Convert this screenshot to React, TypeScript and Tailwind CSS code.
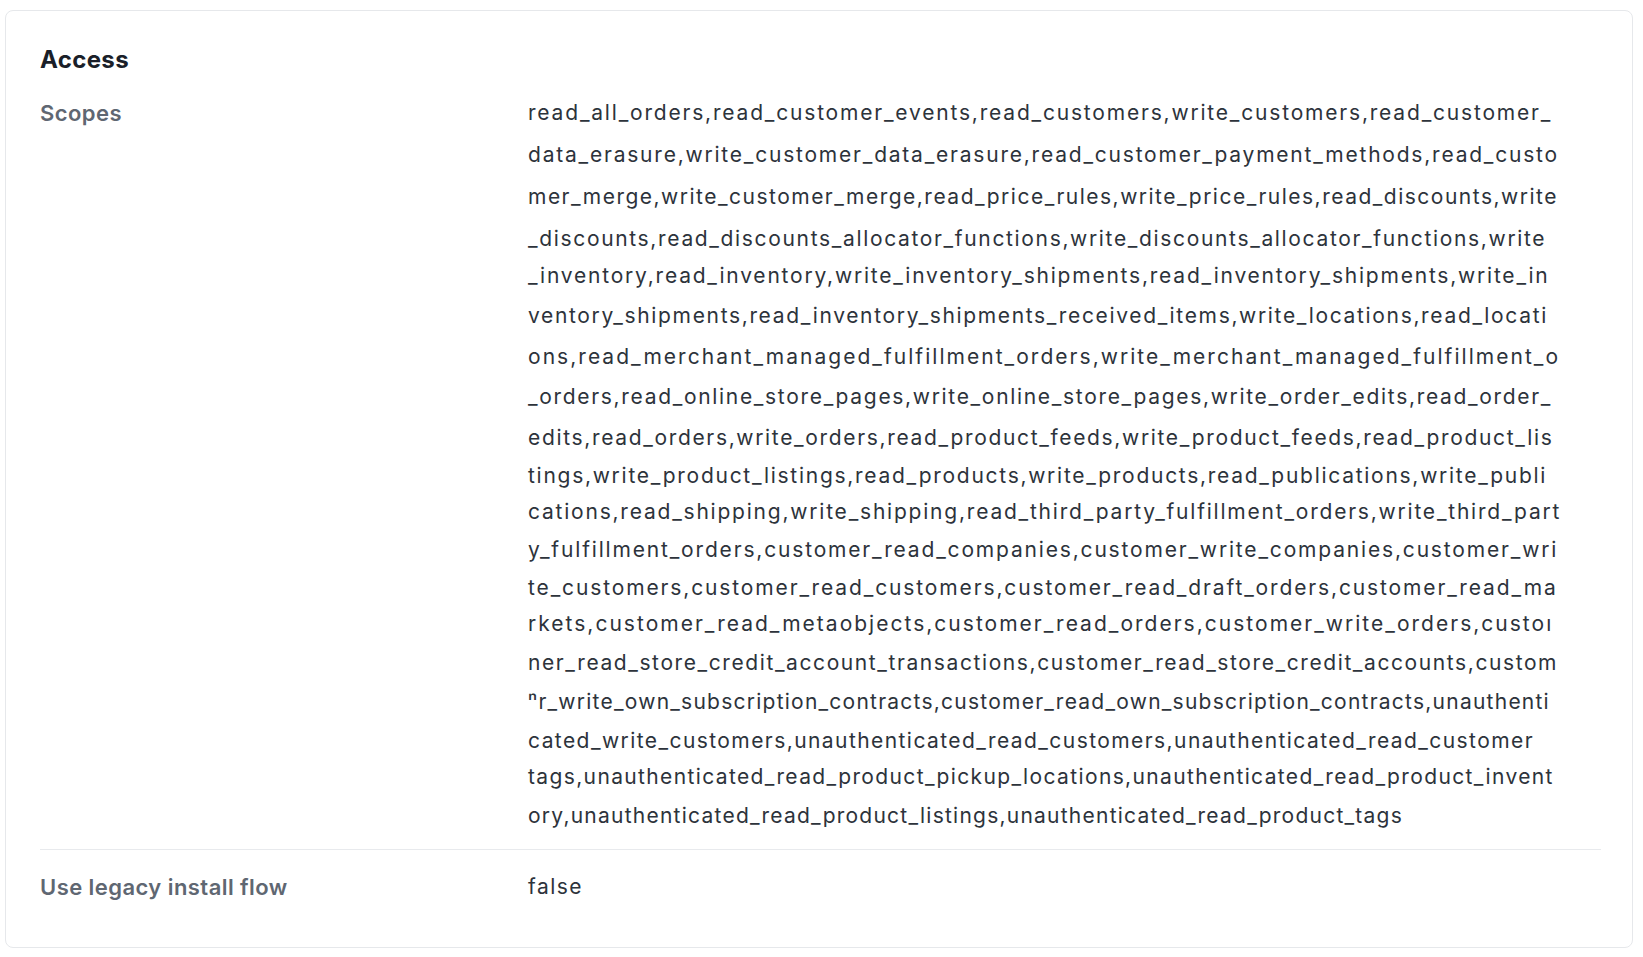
const SCOPE_LINES: { text: string; gap: string; track: string }[] = [
  { text: 'read_all_orders,read_customer_events,read_customers,write_customers,read_customer_', gap: 'mt-0', track: 'tracking-[0.086em]' },
  { text: 'data_erasure,write_customer_data_erasure,read_customer_payment_methods,read_custo', gap: 'mt-[2px]', track: 'tracking-[0.085em]' },
  { text: 'mer_merge,write_customer_merge,read_price_rules,write_price_rules,read_discounts,write', gap: 'mt-[2px]', track: 'tracking-[0.071em]' },
  { text: '_discounts,read_discounts_allocator_functions,write_discounts_allocator_functions,write', gap: 'mt-[2px]', track: 'tracking-[0.079em]' },
  { text: '_inventory,read_inventory,write_inventory_shipments,read_inventory_shipments,write_in', gap: '-mt-[3px]', track: 'tracking-[0.085em]' },
  { text: 'ventory_shipments,read_inventory_shipments_received_items,write_locations,read_locati', gap: 'mt-0', track: 'tracking-[0.079em]' },
  { text: 'ons,read_merchant_managed_fulfillment_orders,write_merchant_managed_fulfillment_o', gap: 'mt-px', track: 'tracking-[0.097em]' },
  { text: '_orders,read_online_store_pages,write_online_store_pages,write_order_edits,read_order_', gap: 'mt-0', track: 'tracking-[0.080em]' },
  { text: 'edits,read_orders,write_orders,read_product_feeds,write_product_feeds,read_product_lis', gap: 'mt-px', track: 'tracking-[0.079em]' },
  { text: 'tings,write_product_listings,read_products,write_products,read_publications,write_publi', gap: '-mt-[2px]', track: 'tracking-[0.082em]' },
  { text: 'cations,read_shipping,write_shipping,read_third_party_fulfillment_orders,write_third_part', gap: '-mt-1', track: 'tracking-[0.085em]' },
  { text: 'y_fulfillment_orders,customer_read_companies,customer_write_companies,customer_wri', gap: '-mt-[2px]', track: 'tracking-[0.087em]' },
  { text: 'te_customers,customer_read_customers,customer_read_draft_orders,customer_read_ma', gap: '-mt-[2px]', track: 'tracking-[0.089em]' },
  { text: 'rkets,customer_read_metaobjects,customer_read_orders,customer_write_orders,custo\u0131', gap: '-mt-1', track: 'tracking-[0.096em]' },
  { text: 'ner_read_store_credit_account_transactions,customer_read_store_credit_accounts,custom', gap: '-mt-px', track: 'tracking-[0.076em]' },
  { text: '\u207fr_write_own_subscription_contracts,customer_read_own_subscription_contracts,unauthenti', gap: '-mt-px', track: 'tracking-[0.059em]' },
  { text: 'cated_write_customers,unauthenticated_read_customers,unauthenticated_read_customer', gap: '-mt-px', track: 'tracking-[0.068em]' },
  { text: 'tags,unauthenticated_read_product_pickup_locations,unauthenticated_read_product_invent', gap: '-mt-1', track: 'tracking-[0.065em]' },
  { text: 'ory,unauthenticated_read_product_listings,unauthenticated_read_product_tags', gap: '-mt-px', track: 'tracking-[0.059em]' },
];

const Label = ({ children }: { children: string }) => (
  <div className="w-[488px] shrink-0 text-[22px] leading-[40px] font-semibold tracking-[0.02em] text-[#5f6772]">
    {children}
  </div>
);

export default function App() {
  return (
    <div className="min-h-screen bg-white pt-[10px] pl-[5px] pr-[10px] font-['Inter','Liberation_Sans',sans-serif]">
      <section className="h-[938px] rounded-lg border border-[#e6e8eb] bg-white pl-[34px] pr-[31px] pt-[35px]">
        <h2 className="text-[24px] leading-[28px] font-bold tracking-[0.015em] text-[#1a1f29]">Access</h2>

        <div className="mt-[19px] flex border-b border-[#e8eaed] pb-[13px]">
          <Label>Scopes</Label>
          <div className="text-[21px] leading-[40px] text-[#2d333b] whitespace-nowrap">
            {SCOPE_LINES.map((line, i) => (
              <div key={i} className={`${line.gap} ${line.track}`}>
                {line.text}
              </div>
            ))}
          </div>
        </div>

        <div className="flex pt-[17px]">
          <Label>Use legacy install flow</Label>
          <div className="text-[21px] leading-[40px] tracking-[0.07em] text-[#2d333b]">false</div>
        </div>
      </section>
    </div>
  );
}
